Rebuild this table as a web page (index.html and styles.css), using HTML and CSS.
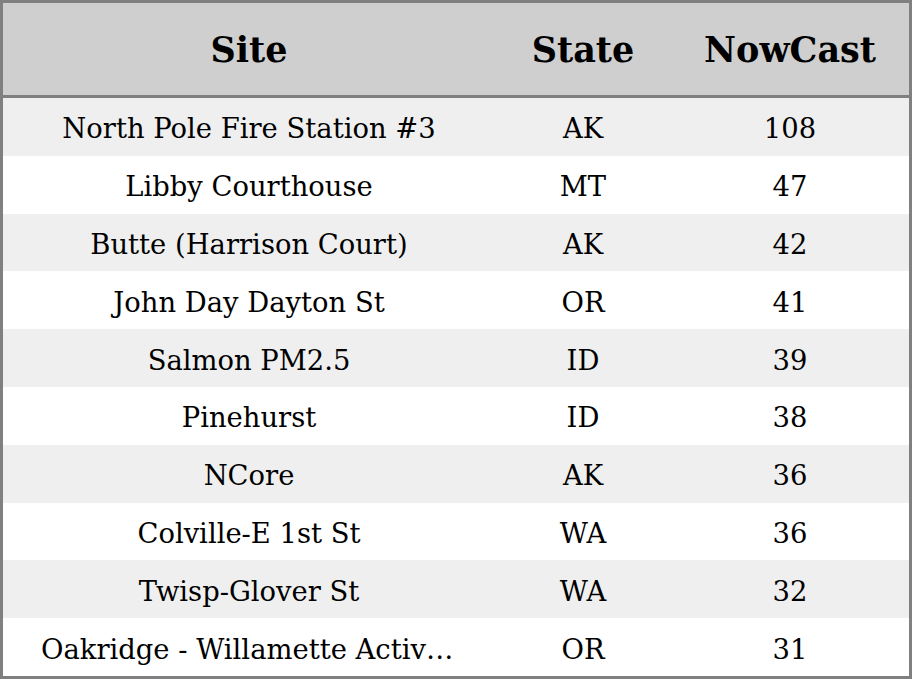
FILE: index.html
```html
<!DOCTYPE html>
<html>
<head>
<meta charset="utf-8">
<link rel="stylesheet" href="styles.css">
</head>
<body>
<div class="table">
  <div class="row head">
    <div class="cell site">Site</div>
    <div class="cell">State</div>
    <div class="cell">NowCast</div>
  </div>
  <div class="body">
    <div class="row odd"><div class="cell site">North Pole Fire Station #3</div><div class="cell">AK</div><div class="cell">108</div></div>
    <div class="row"><div class="cell site">Libby Courthouse</div><div class="cell">MT</div><div class="cell">47</div></div>
    <div class="row odd"><div class="cell site">Butte (Harrison Court)</div><div class="cell">AK</div><div class="cell">42</div></div>
    <div class="row"><div class="cell site">John Day Dayton St</div><div class="cell">OR</div><div class="cell">41</div></div>
    <div class="row odd"><div class="cell site">Salmon PM2.5</div><div class="cell">ID</div><div class="cell">39</div></div>
    <div class="row"><div class="cell site">Pinehurst</div><div class="cell">ID</div><div class="cell">38</div></div>
    <div class="row odd"><div class="cell site">NCore</div><div class="cell">AK</div><div class="cell">36</div></div>
    <div class="row"><div class="cell site">Colville-E 1st St</div><div class="cell">WA</div><div class="cell">36</div></div>
    <div class="row odd"><div class="cell site">Twisp-Glover St</div><div class="cell">WA</div><div class="cell">32</div></div>
    <div class="row"><div class="cell site">Oakridge - Willamette Activity Center</div><div class="cell">OR</div><div class="cell">31</div></div>
  </div>
</div>
</body>
</html>
```
FILE: styles.css
```css
html, body {
  margin: 0;
  padding: 0;
  background: #ffffff;
}
.table {
  box-sizing: border-box;
  width: 912px;
  height: 679px;
  border: 3px solid #808080;
  display: flex;
  flex-direction: column;
  font-family: "DejaVu Serif", serif;
  color: #000;
}
.row {
  display: grid;
  grid-template-columns: 492px 176px 238px;
  align-items: center;
}
.head {
  height: 92px;
  flex: none;
  background: #cfcfcf;
  border-bottom: 3px solid #808080;
  font-weight: bold;
  font-size: 35px;
}
.body {
  flex: 1;
  display: grid;
  grid-template-rows: repeat(10, 1fr);
  font-size: 27.4px;
}
.odd {
  background: #efefef;
}
.cell {
  text-align: center;
  white-space: nowrap;
  overflow: hidden;
  text-overflow: ellipsis;
  min-width: 0;
}
.body .cell {
  padding-top: 4px;
}
.body .site {
  padding-left: 38px;
  padding-right: 38px;
}
```
